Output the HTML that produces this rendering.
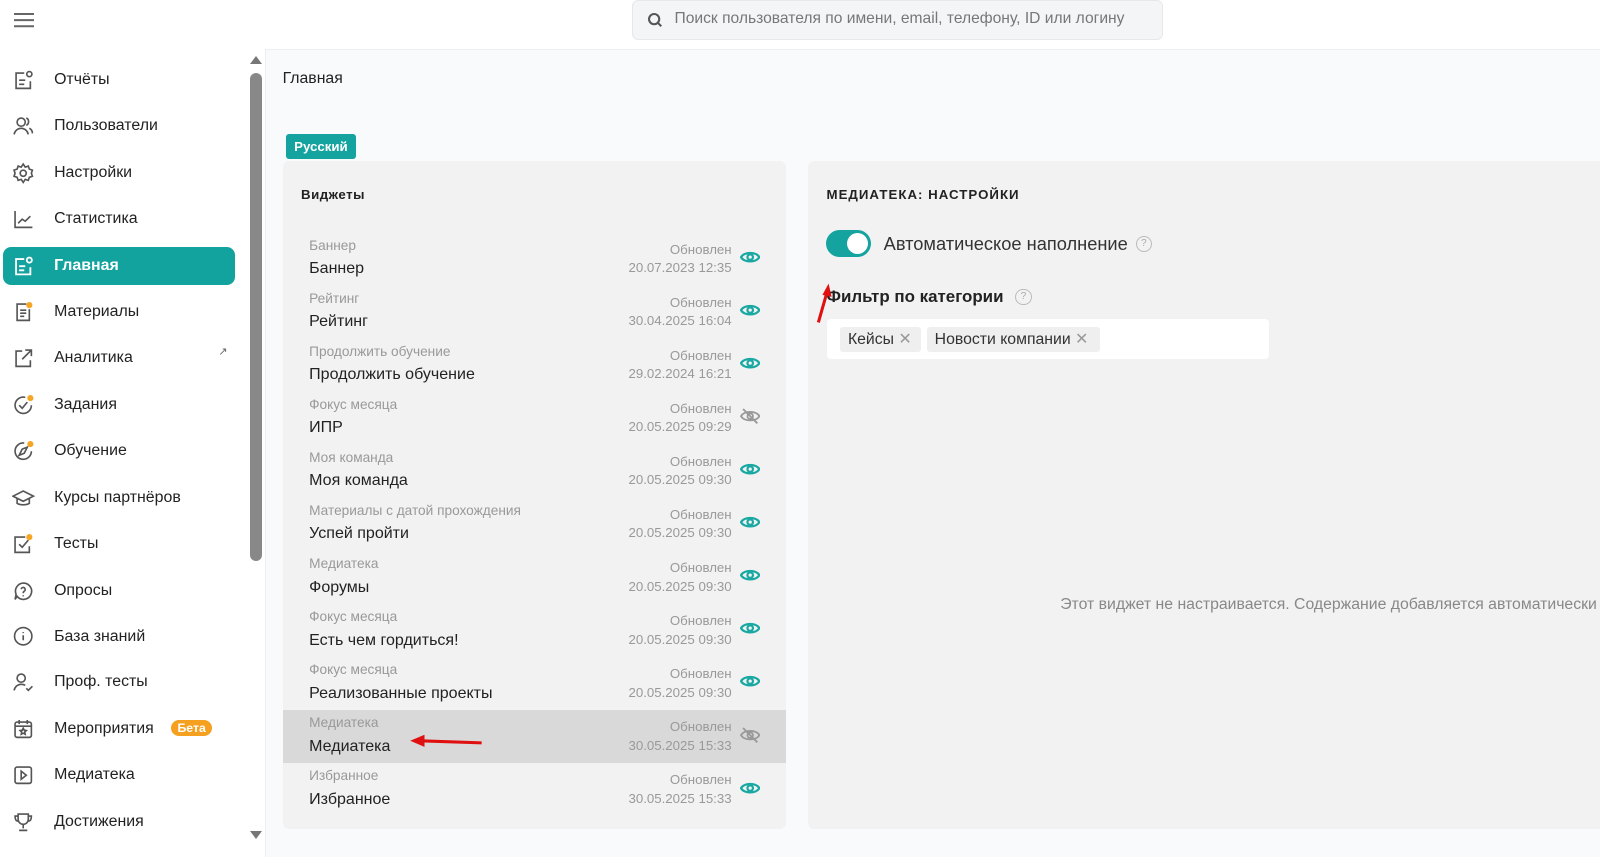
<!DOCTYPE html>
<html><head><meta charset="utf-8"><style>
*{margin:0;padding:0;box-sizing:border-box}
body{width:1600px;height:840px;overflow:hidden;background:#fff;font-family:"Liberation Sans",sans-serif;color:#222;position:relative}
#w{position:absolute;left:0;top:0;width:1600px;height:840px;zoom:1.0204}
.abs{position:absolute}
.nav{position:absolute;left:3px;width:227px;height:37px;border-radius:8px;font-size:15.6px;color:#222}
.nav span{position:absolute;left:50px;top:10px}
.nav svg{position:absolute;left:9px;top:8px}
.nav.act{background:#13a39f;color:#fff;font-weight:bold}
.row{position:absolute;left:277px;width:493px;height:52px}
.row .l{position:absolute;left:26px;top:3px;font-size:13.4px;color:#999}
.row .t{position:absolute;left:26px;top:24px;font-size:15.7px;color:#222}
.row .o{position:absolute;right:53px;top:7px;font-size:13px;color:#999}
.row .d{position:absolute;right:53px;top:25px;font-size:13px;color:#999}
.row svg{position:absolute;left:448px;top:14px}
</style></head><body><div id="w">
<div class="abs" style="left:14px;top:13px;width:19px;height:2px;background:#666;box-shadow:0 6px 0 #666,0 12px 0 #666"></div>
<div class="abs" style="left:619px;top:0;width:521px;height:39px;background:#f4f5f6;border:1px solid #e6e8ea;border-radius:6px"></div>
<svg class="abs" style="left:634px;top:12px" width="16" height="16" viewBox="0 0 16 16"><circle cx="7" cy="7" r="5" fill="none" stroke="#555" stroke-width="2"/><path d="M11 11l3 3" stroke="#555" stroke-width="2"/></svg>
<div class="abs" style="left:661px;top:10px;font-size:15.3px;color:#777">Поиск пользователя по имени, email, телефону, ID или логину</div>
<div class="abs" style="left:260px;top:48px;width:1340px;height:792px;background:#f9fafb;border-top:1px solid #eceef0;border-left:1px solid #eceef0"></div>
<div class="abs" style="left:245px;top:55px;width:0;height:0;border-left:6px solid transparent;border-right:6px solid transparent;border-bottom:8px solid #777"></div>
<div class="abs" style="left:245px;top:72px;width:12px;height:478px;background:#888;border-radius:6px"></div>
<div class="abs" style="left:245px;top:814px;width:0;height:0;border-left:6px solid transparent;border-right:6px solid transparent;border-top:8px solid #777"></div>
<div class="nav" style="top:60px"><svg width="22" height="22" viewBox="0 0 22 22" fill="none" stroke="#555" stroke-width="1.6"><path d="M12 4H4v15h14v-7"/><path d="M7 11h6M7 15h5"/><circle cx="17" cy="5" r="2.5"/></svg><span>Отчёты</span></div>
<div class="nav" style="top:105px"><svg width="22" height="22" viewBox="0 0 22 22" fill="none" stroke="#555" stroke-width="1.6"><circle cx="9" cy="7" r="4"/><path d="M2 19c1-4 4-6 7-6s6 2 7 6M14 3c3 1 3 6 0 7M17 13c2 1 3 3 3 5"/></svg><span>Пользователи</span></div>
<div class="nav" style="top:151px"><svg width="22" height="22" viewBox="0 0 22 22" fill="none" stroke="#555" stroke-width="1.6"><circle cx="11" cy="11" r="3"/><path d="M11 2l2 3 3-1 1 3 3 1-1 3 1 3-3 1-1 3-3-1-2 3-2-3-3 1-1-3-3-1 1-3-1-3 3-1 1-3 3 1z"/></svg><span>Настройки</span></div>
<div class="nav" style="top:196px"><svg width="22" height="22" viewBox="0 0 22 22" fill="none" stroke="#555" stroke-width="1.6"><path d="M3 3v16h17M6 15l4-4 3 2 5-5"/></svg><span>Статистика</span></div>
<div class="nav act" style="top:242px"><svg width="22" height="22" viewBox="0 0 22 22" fill="none" stroke="#fff" stroke-width="1.8"><path d="M12 4H4v15h14v-7"/><path d="M7 11h6M7 15h5"/><circle cx="17" cy="5" r="2.5"/></svg><span>Главная</span></div>
<div class="nav" style="top:287px"><svg width="22" height="22" viewBox="0 0 22 22" fill="none" stroke="#555" stroke-width="1.6"><path d="M14 3H5v16h12V8"/><path d="M8 9h6M8 12h6M8 15h4"/><circle cx="17" cy="4" r="3" fill="#f5a623" stroke="none"/></svg><span>Материалы</span></div>
<div class="nav" style="top:332px"><svg width="22" height="22" viewBox="0 0 22 22" fill="none" stroke="#555" stroke-width="1.6"><path d="M10 4H4v15h14v-6M13 3h6v6M19 3l-9 9"/></svg><span>Аналитика</span><div class="abs" style="left:211px;top:6px;font-size:11px;color:#666">↗</div></div>
<div class="nav" style="top:378px"><svg width="22" height="22" viewBox="0 0 22 22" fill="none" stroke="#555" stroke-width="1.6"><path d="M19 11a8 8 0 1 1-6-7.7"/><path d="M7 11l3 3 5-6"/><circle cx="18" cy="4" r="3" fill="#f5a623" stroke="none"/></svg><span>Задания</span></div>
<div class="nav" style="top:423px"><svg width="22" height="22" viewBox="0 0 22 22" fill="none" stroke="#555" stroke-width="1.6"><path d="M19 11a8 8 0 1 1-7-8"/><path d="M7 15l3-6 5-2-3 6z"/><circle cx="18" cy="4" r="3" fill="#f5a623" stroke="none"/></svg><span>Обучение</span></div>
<div class="nav" style="top:469px"><svg width="22" height="22" viewBox="0 0 22 22" fill="none" stroke="#555" stroke-width="1.6"><path d="M1 9l10-5 10 5-10 5z"/><path d="M5 11v5c3 2 9 2 12 0v-5"/></svg><span>Курсы партнёров</span></div>
<div class="nav" style="top:514px"><svg width="22" height="22" viewBox="0 0 22 22" fill="none" stroke="#555" stroke-width="1.6"><path d="M13 4H3v15h14v-6"/><path d="M7 11l3 3 6-7"/><circle cx="17" cy="4" r="3" fill="#f5a623" stroke="none"/></svg><span>Тесты</span></div>
<div class="nav" style="top:560px"><svg width="22" height="22" viewBox="0 0 22 22" fill="none" stroke="#555" stroke-width="1.6"><path d="M11 3a8 8 0 1 1-6 13l-2 3 1-5A8 8 0 0 1 11 3z"/><path d="M9 9a2 2 0 1 1 3 2c-1 .5-1 1-1 2M11 15v1"/></svg><span>Опросы</span></div>
<div class="nav" style="top:605px"><svg width="22" height="22" viewBox="0 0 22 22" fill="none" stroke="#555" stroke-width="1.6"><circle cx="11" cy="11" r="8.5"/><path d="M11 10v5M11 7v1"/></svg><span>База знаний</span></div>
<div class="nav" style="top:650px"><svg width="22" height="22" viewBox="0 0 22 22" fill="none" stroke="#555" stroke-width="1.6"><circle cx="9" cy="7" r="4"/><path d="M2 19c1-4 4-6 7-6 2 0 3 .5 4 1M14 17l2 2 4-4"/></svg><span>Проф. тесты</span></div>
<div class="nav" style="top:696px"><svg width="22" height="22" viewBox="0 0 22 22" fill="none" stroke="#555" stroke-width="1.6"><rect x="3" y="4" width="16" height="15" rx="2"/><path d="M3 8h16M7 2v4M15 2v4M11 10l1 2 2 .3-1.5 1.4.4 2.2-1.9-1-1.9 1 .4-2.2L8 12.3l2-.3z"/></svg><span>Мероприятия</span><div class="abs" style="left:165px;top:10px;background:#f5a01e;color:#fff;font-size:12px;font-weight:bold;padding:1px 6px;border-radius:8px">Бета</div></div>
<div class="nav" style="top:741px"><svg width="22" height="22" viewBox="0 0 22 22" fill="none" stroke="#555" stroke-width="1.6"><rect x="3" y="3" width="16" height="16" rx="2"/><path d="M9 7l5 4-5 4z"/></svg><span>Медиатека</span></div>
<div class="nav" style="top:787px"><svg width="22" height="22" viewBox="0 0 22 22" fill="none" stroke="#555" stroke-width="1.6"><path d="M6 3h10v5a5 5 0 0 1-10 0zM6 5H3c0 3 1 5 3 5M16 5h3c0 3-1 5-3 5M11 13v4M7 19h8"/></svg><span>Достижения</span></div>
<div class="abs" style="left:277px;top:69px;font-size:15.5px">Главная</div>
<div class="abs" style="left:280px;top:131px;width:69px;height:25px;background:#15a39f;border-radius:3px;color:#fff;font-size:13px;font-weight:bold;text-align:center;line-height:25px">Русский</div>
<div class="abs" style="left:277px;top:158px;width:493px;height:654px;background:#f2f2f2;border-radius:6px"></div>
<div class="abs" style="left:295px;top:183px;font-size:13px;font-weight:bold;letter-spacing:.5px">Виджеты</div>
<div class="abs" style="left:277px;top:696px;width:493px;height:52px;background:#d9d9d9"></div>
<div id="rows"></div>
<div class="abs" style="left:792px;top:158px;width:808px;height:654px;background:#f2f2f2;border-radius:6px"></div>
<div class="abs" style="left:810px;top:183px;font-size:13px;font-weight:bold;letter-spacing:1px">МЕДИАТЕКА: НАСТРОЙКИ</div>
<div class="abs" style="left:809px;top:225px;width:45px;height:27px;background:#14a39f;border-radius:14px"><div style="position:absolute;right:3px;top:3px;width:21px;height:21px;border-radius:50%;background:#fff"></div></div>
<div class="abs" style="left:866px;top:228px;font-size:17.9px;color:#333">Автоматическое наполнение</div>
<div class="abs" style="left:1113px;top:231px;width:16px;height:16px;border:1.5px solid #bbb;border-radius:50%;font-size:10px;color:#aaa;text-align:center;line-height:13px">?</div>
<div class="abs" style="left:810px;top:281px;font-size:16.6px;font-weight:bold;color:#222">Фильтр по категории</div>
<div class="abs" style="left:995px;top:283px;width:16px;height:16px;border:1.5px solid #bbb;border-radius:50%;font-size:10px;color:#aaa;text-align:center;line-height:13px">?</div>
<div class="abs" style="left:810px;top:313px;width:434px;height:39px;background:#fff;border-radius:4px"></div>
<div class="abs" style="left:823px;top:320px;width:80px;height:25px;background:#efefef;border-radius:3px;font-size:15.5px;line-height:25px;padding-left:8px;color:#333;white-space:nowrap">Кейсы <span style="color:#999">✕</span></div>
<div class="abs" style="left:908px;top:320px;width:170px;height:25px;background:#efefef;border-radius:3px;font-size:15.5px;line-height:25px;padding-left:8px;color:#333;white-space:nowrap">Новости компании <span style="color:#999">✕</span></div>
<div class="abs" style="left:1039px;top:584px;font-size:15.5px;color:#888;white-space:nowrap">Этот виджет не настраивается. Содержание добавляется автоматически</div>
<svg class="abs" style="left:0;top:0" width="1600" height="840"><path d="M472 728L412 726" stroke="#e01010" stroke-width="3"/><path d="M402 726l14-6 0 12z" fill="#e01010"/><path d="M802 316L810 288" stroke="#e01010" stroke-width="3"/><path d="M812 278l3 13-9-2z" fill="#e01010"/></svg>
<script>
var d=[["Баннер","Баннер","20.07.2023 12:35",1],["Рейтинг","Рейтинг","30.04.2025 16:04",1],["Продолжить обучение","Продолжить обучение","29.02.2024 16:21",1],["Фокус месяца","ИПР","20.05.2025 09:29",0],["Моя команда","Моя команда","20.05.2025 09:30",1],["Материалы с датой прохождения","Успей пройти","20.05.2025 09:30",1],["Медиатека","Форумы","20.05.2025 09:30",1],["Фокус месяца","Есть чем гордиться!","20.05.2025 09:30",1],["Фокус месяца","Реализованные проекты","20.05.2025 09:30",1],["Медиатека","Медиатека","30.05.2025 15:33",0],["Избранное","Избранное","30.05.2025 15:33",1]];
var eye='<svg width="20" height="16" viewBox="0 0 20 16" fill="none" stroke="#1aa8a3" stroke-width="2.2"><path d="M1 8c3-5.5 15-5.5 18 0-3 5.5-15 5.5-18 0z"/><circle cx="10" cy="8" r="2.7"/></svg>';
var neye='<svg width="20" height="16" viewBox="0 0 20 16" fill="none" stroke="#999" stroke-width="1.8"><path d="M1 8c3-5.5 15-5.5 18 0-3 5.5-15 5.5-18 0z"/><circle cx="10" cy="8" r="2.7"/><path d="M3 1l14 14"/></svg>';
var h='';d.forEach(function(r,i){h+='<div class="row" style="top:'+(230+52*i)+'px"><div class="l">'+r[0]+'</div><div class="t">'+r[1]+'</div><div class="o">Обновлен</div><div class="d">'+r[2]+'</div>'+(r[3]?eye:neye)+'</div>';});
document.getElementById('rows').innerHTML=h;
</script>
</div></body></html>
